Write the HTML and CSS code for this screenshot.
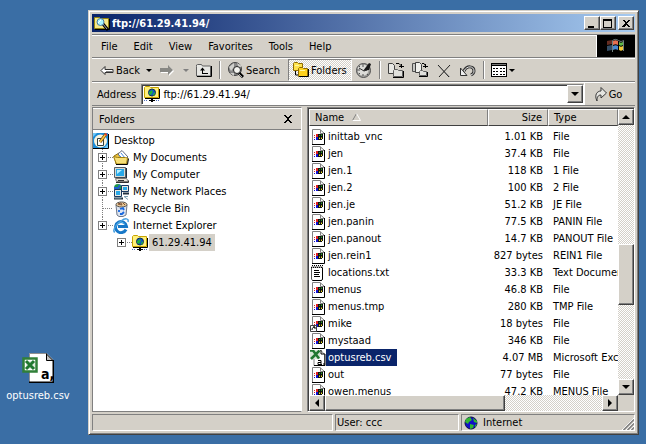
FILE: index.html
```
<!DOCTYPE html>
<html lang="en">
<head>
<meta charset="utf-8">
<title>ftp://61.29.41.94/</title>
<link rel="stylesheet" href="styles.css">
</head>
<body>
<svg class="defs" aria-hidden="true">
  <symbol id="folder-search" viewBox="0 0 16 16">
    <path d="M.500 2.500h5l1 1h8v10H.500z" fill="#f8e888" stroke="#948410"/>
    <path d="M15.500 4v10.500H1" fill="none" stroke="#000"/>
    <path d="M9 9l5 6" stroke="#000" stroke-width="3"/><path d="M9 9l4 5" stroke="#a0a0b0"/>
    <circle cx="6.500" cy="7" r="3.500" fill="#a8f4ff" stroke="#4878a0"/>
    <path d="M4 8l3-3" stroke="#fff"/>
  </symbol>
  <symbol id="folder-net" viewBox="0 0 16 16">
    <path d="M.500 1.500l1-1h4l1 1h8v10H.500z" fill="#fff07c" stroke="#c8a400"/>
    <path d="M15.500 3v9.500H1" fill="none" stroke="#000"/>
    <circle cx="8" cy="6.500" r="3.500" fill="#1050d0" stroke="#103050"/>
    <path d="M5 6l3-2 1 2-2 3-2-1zM9 8l2-2v2l-2 2z" fill="#20b040"/>
    <path d="M0 14.500h4M12 14.500h4" stroke="#5070c0" stroke-dasharray="1 1"/><path d="M5 14.500h6M7 13.500h2M7 15.500h2" stroke="#000"/>
  </symbol>
  <symbol id="desktop" viewBox="0 0 16 16">
    <path d="M0 0h15v15H0z" fill="#1c8cd8"/><path d="M0 15.500h15.500V1" fill="none" stroke="#000"/>
    <path d="M0 0h4L0 4zM15 15h-4l4-4z" fill="#70c8f8"/>
    <circle cx="7.500" cy="8" r="6.500" fill="#f8f4e0"/>
    <path d="M4.500 5.500h6v7h-6z" fill="#fff" stroke="#304040"/>
    <path d="M7 9l6-8" stroke="#7a4a10" stroke-width="3"/><path d="M7 9l6-8" stroke="#ffc840" stroke-width="1.500"/><path d="M12 1l2 1" stroke="#e04030" stroke-width="2"/>
  </symbol>
  <symbol id="documents" viewBox="0 0 16 16">
    <path d="M1 6l5-3 8 4v7H3z" fill="#e8c040" stroke="#907010"/>
    <path d="M5 4l4-3.500 6 6.500-4 4z" fill="#fff" stroke="#606880"/><path d="M8 3l4 5M6 5l4 4" stroke="#4888e0"/>
    <path d="M.500 6.500l4 1h8l2 .500-1 6H3.500z" fill="#f8e078" stroke="#a08010"/><path d="M3 14.500h11.500l1-6" fill="none" stroke="#000"/>
  </symbol>
  <symbol id="computer" viewBox="0 0 16 16">
    <path d="M1.500.500h11v10h-11z" fill="#d8d8d0" stroke="#586068"/><path d="M3 2h8v7H3z" fill="#28a8e8"/><path d="M4 3h5l-5 4z" fill="#b8f0ff"/>
    <path d="M13.500 1v10H3" fill="none" stroke="#203040"/><path d="M2.500 11.500h11l2 3h-12z" fill="#e8e4d8" stroke="#807c78"/><path d="M3 15.500h12.500v-2M5 13.500h6" stroke="#303030" fill="none"/>
  </symbol>
  <symbol id="network" viewBox="0 0 16 16">
    <circle cx="5" cy="4" r="4" fill="#209848"/><path d="M1 4h4l2-3" stroke="#2060d0" stroke-width="2" fill="none"/>
    <path d="M8.500 1.500h7v6h-7zM1.500 5.500h7v7h-7z" fill="#e8e8e0" stroke="#183860"/><path d="M10 3h4v3h-4zM3 7h4v4H3z" fill="#28a8e8"/>
    <path d="M1 14.500h9M10 9.500h6" stroke="#203040" stroke-width="2"/><path d="M1.500 14h7M11 12.500l4 3M11 12.500h4" stroke="#80a0b0"/>
  </symbol>
  <symbol id="recycle" viewBox="0 0 16 16">
    <path d="M3 4h11l-1 10-3 1.500H6L4 14z" fill="#dce4f0" stroke="#707888"/>
    <ellipse cx="8.500" cy="3.500" rx="5.500" ry="2.500" fill="#e8c898" stroke="#505050"/><path d="M5 3l3-1 1 2zM10 2l2 2" fill="#fff" stroke="#805030"/>
    <path d="M7 8l3-1 1 2M11 11l-2 2H7M6 11V9" stroke="#1868e0" stroke-width="1.800" fill="none"/>
  </symbol>
  <symbol id="ie" viewBox="0 0 16 16">
    <path d="M13 11.500A5.500 5.500 0 1 1 13.500 8.500H5" fill="none" stroke="#1878c8" stroke-width="3"/>
    <path d="M12 7A4.500 4.500 0 0 0 3.500 7" fill="none" stroke="#58b8f0"/>
    <path d="M2 14C-1 14 2 7 8 3c4-3 8-3 7 1" fill="none" stroke="#48a0e0" stroke-width="1.500"/>
  </symbol>
  <symbol id="file" viewBox="0 0 16 16">
    <path d="M2 0h8l4 4v12H2z" fill="#fff"/>
    <path d="M2.500 15V.500H10" fill="none" stroke="#808080"/><path d="M10.500.500v4H14M10.500 1l3.500 3" fill="none" stroke="#808080"/>
    <path d="M14.500 4v11.500H2" fill="none" stroke="#000"/>
    <path d="M4 6h1v1H4zm2-1h3v3H6zM4 8h1v1H4z" fill="#e02020"/><path d="M4 10h1v1H4zm2-2h3v3H6z" fill="#1010d0"/>
    <path d="M8 5h5v5h-1v1H8z" fill="#101010"/><path d="M9 6h1v1H9zm2-.500h1v1.500h-1z" fill="#20a020"/><path d="M9 8.500h1V10H9zm2 0h1V10h-1z" fill="#f0e020"/>
  </symbol>
  <symbol id="shortcut" viewBox="0 0 16 16">
    <use href="#file"/><path d="M.500 9.500h6v6h-6z" fill="#fff" stroke="#404040"/><path d="M2 14c0-2 1-3 3-3M3 11h2v2" fill="none" stroke="#000"/>
  </symbol>
  <symbol id="text" viewBox="0 0 16 16">
    <path d="M1.500 2v12l1 1.500h9l1-1V2z" fill="#fff" stroke="#585858"/><path d="M12.500 3v11l-1 1.500h-9" fill="none" stroke="#000"/>
    <path d="M2 .500h11M1 2.500h12" stroke="#000" stroke-dasharray="1 1"/><path d="M4 5.500h5M4 7.500h6M4 9.500h5M4 11.500h6" stroke="#000"/>
  </symbol>
  <symbol id="csv-small" viewBox="0 0 16 16">
    <path d="M4 .500h7l3.500 4v11H4z" fill="#fff" stroke="#808080"/><path d="M11 0v4h4v11.500H4" fill="none" stroke="#000"/>
    <path d="M0 0h10v9H0z" fill="#d8e8d8"/><path d="M0 .500h3l6 8M9.500.500L1 9" fill="none" stroke="#207830" stroke-width="2.500"/>
    <path d="M8 10.500h3v4H8v-2h3M11 14.500h1M14 13v2" fill="none" stroke="#000"/>
  </symbol>
  <symbol id="csv-large" viewBox="0 0 32 30">
    <path d="M7 .500h18l6 6V30H7z" fill="#fff"/><path d="M7.500 29V.500H25" fill="none" stroke="#909090"/>
    <path d="M24.500.500v7H32M24.500 1l7 7" fill="#c0c0c0" stroke="#000"/><path d="M31.500 7v22.500H7" fill="none" stroke="#000" stroke-width="2"/>
    <path d="M1.500 5.500h13v13h-13z" fill="#fff" stroke="#308038" stroke-width="2.500"/><path d="M4 8h9v8H4z" fill="#e0ece0"/>
    <path d="M4 8l8 8M12 8l-8 8" stroke="#207830" stroke-width="3"/>
    <text class="csv-letter" x="19" y="26">a,</text>
  </symbol>
  <symbol id="back" viewBox="0 0 16 16">
    <path d="M2 8.500l4-4v3h8v3H6v2z" fill="#fff" stroke="#303030"/><path d="M7 9.500h7" stroke="#808080"/>
  </symbol>
  <symbol id="forward" viewBox="0 0 16 16">
    <path d="M15 9l-5-5v3H2v4h8v3z" fill="#fff"/><path d="M14 8L9 3v3H1v4h8v3z" fill="#888884"/>
  </symbol>
  <symbol id="up" viewBox="0 0 16 16">
    <path d="M.500 4.500V3l1-.500h4l1 1.500h8v10H.500z" fill="#e8e8e4" stroke="#606060"/><path d="M1 14.500h14.500V4" fill="none" stroke="#000"/>
    <path d="M4 8.500L6.500 5.500 9 8.500zM6 8h1v4H6zM8 11h4v1H8zM6 11h2v1H6z" fill="#000"/>
  </symbol>
  <symbol id="search" viewBox="0 0 16 16">
    <circle cx="7" cy="7" r="6.500" fill="#888" stroke="#444"/><path d="M1 5l5-4v4L3 9zM9 1l5 3-3 2zM2 11l4 3v-3z" fill="#d0d0cc"/>
    <path d="M11 11l4 4" stroke="#000" stroke-width="3"/><circle cx="9" cy="8" r="3.500" fill="#f4f4f0" stroke="#222"/><path d="M11 12l3 3" stroke="#aaa"/>
  </symbol>
  <symbol id="folders" viewBox="0 0 16 16">
    <path d="M.500 1.500l1-1h3l1 1h4v7h-9z" fill="#ffe24c" stroke="#906c00"/>
    <path d="M2.500 9v4H5" fill="none" stroke="#000"/>
    <path d="M5.500 6.500l1-1h3l1 1h4v8h-9z" fill="#ffd21c" stroke="#906c00"/><path d="M6 14.500h9.500V7" fill="none" stroke="#000"/><path d="M7 8h5v1H7zM2 3h4v1H2z" fill="#fff8a0"/>
  </symbol>
  <symbol id="history" viewBox="0 0 16 16">
    <circle cx="7.500" cy="8.500" r="7" fill="#a0a09c" stroke="#505050"/><circle cx="7" cy="8" r="5.500" fill="#dcdcd8"/>
    <path d="M7 9l6-8 2 1-2 6z" fill="#181818"/><path d="M7 2v3M7 12v2M1 8h3M3 4l1 1M3 12l1-1M11 12l1 1" stroke="#505050"/><path d="M3 6l5 3 3-1" fill="none" stroke="#303030"/>
  </symbol>
  <symbol id="move" viewBox="0 0 16 16">
    <path d="M.500 1.500h4l2 2v8h-6z" fill="#e8e8e4" stroke="#404040"/><path d="M8 1.500h3l3 3M11 4.500h5M13.500 2v4" stroke="#000" fill="none"/>
    <path d="M5.500 8.500l1-1h3l1 1h4v6h-9z" fill="#e0e0dc" stroke="#606060"/><path d="M5 15.500h10.500V9" fill="none" stroke="#000"/>
  </symbol>
  <symbol id="copy" viewBox="0 0 16 16">
    <path d="M.500 1.500h5v8h-5z" fill="#c8c8c4" stroke="#505050"/><path d="M3.500.500h4l2 2v8h-6z" fill="#f0f0ec" stroke="#404040"/><path d="M10 1.500h2l2 3M11 4.500h5M13.500 2v4" stroke="#000" fill="none"/>
    <path d="M7.500 9.500l1-1h2l1 1h3v4h-7z" fill="#e0e0dc" stroke="#606060"/><path d="M7 14.500h8.500V10" fill="none" stroke="#000"/>
  </symbol>
  <symbol id="delete" viewBox="0 0 16 16">
    <path d="M3 4l11 11" stroke="#aaa"/><path d="M2 3l11 12M14 3L3 15" stroke="#202020"/>
  </symbol>
  <symbol id="undo" viewBox="0 0 16 16">
    <path d="M4 9c3-6 10-5 10 0 0 2-1 3-3 4" fill="none" stroke="#303030" stroke-width="3"/><path d="M4 9c3-6 10-5 10 0 0 2-1 3-3 4" fill="none" stroke="#e8e8e8"/>
    <path d="M.500 6v7.500H7z" fill="#eee" stroke="#303030"/>
  </symbol>
  <symbol id="views" viewBox="0 0 16 16">
    <path d="M0 1h16v14H0z" fill="#000"/><path d="M1 4h14v10H1z" fill="#fff"/><path d="M1 2h14v1H1z" fill="#777"/>
    <path d="M2 6h2v1H2zm3 0h2v1H5zm4 0h2v1H9zm3 0h2v1h-2zM2 9h2v1H2zm3 0h2v1H5zm4 0h2v1H9zm3 0h2v1h-2zM2 12h2v1H2zm3 0h2v1H5zm4 0h2v1H9zm3 0h2v1h-2z" fill="#000"/>
  </symbol>
  <symbol id="go" viewBox="0 0 16 16">
    <path d="M4 15C1 9 4 5 8 5V1.500L13.500 7 8 12V9C5 9 4 11 4 15z" fill="#e4e4e0" stroke="#383838"/>
  </symbol>
  <symbol id="globe" viewBox="0 0 16 16">
    <circle cx="8" cy="8" r="6" fill="#1010c8" stroke="#101040"/><path d="M3 4l4-2 2 3-3 2-1 2-3-2zM10 3l4 3v2l-3-1zM7 9l4 1-1 3-3 1zM12 10l2-1-2 4z" fill="#30b830"/>
  </symbol>
  <symbol id="flag" viewBox="0 0 20 18">
    <path d="M1 4l5-1v4l-5 1z" fill="#904030" opacity=".7"/><path d="M1 9l5-1v5l-5 1z" fill="#406080" opacity=".8"/>
    <path d="M7 4c2-1 3-1 5 0v4c-2-1-3-1-5 0z" fill="#e87050"/><path d="M13 5c2 1 2 1 4 0v3c-2 1-2 1-4 0z" fill="#60b848"/>
    <path d="M7 9c2-1 3-1 5 0v4c-2-1-3-1-5 0z" fill="#4888d0"/><path d="M13 9c2 1 2 1 4 0v4c-2 1-2 1-4 0z" fill="#f0c838"/>
    <path d="M6.500 15V3.500C9 2 10 2 12.500 3.500s3 1 5 0V14" stroke="#708080" fill="none"/>
  </symbol>
</svg>

<main class="desktop">
  <a class="shortcut" href="#optusreb"><svg class="shortcut-icon"><use href="#csv-large"/></svg><span>optusreb.csv</span></a>

  <section class="window">
    <header class="title">
      <svg class="icon"><use href="#folder-search"/></svg>
      <h1>ftp://61.29.41.94/</h1>
      <button class="box" aria-label="Minimize"><svg class="glyph" viewBox="0 0 10 9"><path d="M1 7h6v2H1z"/></svg></button>
      <button class="box" aria-label="Maximize"><svg class="glyph" viewBox="0 0 10 9"><path d="M0 0h9v9H0zM1 2v6h7V2z" fill-rule="evenodd"/></svg></button>
      <button class="box box-close" aria-label="Close"><svg class="glyph" viewBox="0 0 10 9"><path d="M1 1h2l2 2 2-2h2L6 4l3 4H7L5 6 3 8H1l3-4z"/></svg></button>
    </header>

    <div class="menu-row">
      <nav class="menus"><button>File</button><button>Edit</button><button>View</button><button>Favorites</button><button>Tools</button><button>Help</button></nav>
      <div class="brand"><svg class="flag"><use href="#flag"/></svg></div>
    </div>

    <div class="toolbar">
      <button class="tool back"><svg class="icon"><use href="#back"/></svg>Back</button>
      <button class="tool caret" aria-label="Back history"></button>
      <button class="tool" aria-label="Forward"><svg class="icon"><use href="#forward"/></svg></button>
      <button class="tool caret off" aria-label="Forward history"></button>
      <button class="tool" aria-label="Up"><svg class="icon"><use href="#up"/></svg></button>
      <i class="sep"></i>
      <button class="tool search"><svg class="icon"><use href="#search"/></svg>Search</button>
      <button class="tool pressed"><svg class="icon"><use href="#folders"/></svg>Folders</button>
      <button class="tool" aria-label="History"><svg class="icon"><use href="#history"/></svg></button>
      <i class="sep"></i>
      <button class="tool" aria-label="Move To"><svg class="icon"><use href="#move"/></svg></button>
      <button class="tool" aria-label="Copy To"><svg class="icon"><use href="#copy"/></svg></button>
      <button class="tool" aria-label="Delete"><svg class="icon"><use href="#delete"/></svg></button>
      <button class="tool" aria-label="Undo"><svg class="icon"><use href="#undo"/></svg></button>
      <i class="sep"></i>
      <button class="tool views" aria-label="Views"><svg class="icon"><use href="#views"/></svg><span class="tri"></span></button>
    </div>

    <form class="address">
      <label for="url">Address</label>
      <div class="combo">
        <svg class="icon"><use href="#folder-net"/></svg>
        <input id="url" type="text" value="ftp://61.29.41.94/">
        <button type="button" class="box drop" aria-label="Show addresses"><span class="tri"></span></button>
      </div>
      <button type="button" class="go"><svg class="icon"><use href="#go"/></svg>Go</button>
    </form>

    <div class="panes">
      <aside class="folders">
        <div class="folders-head"><h2>Folders</h2><button aria-label="Close folders"><svg class="glyph" viewBox="0 0 10 9"><path d="M1 0h2l2 3 2-3h2L6 4l3 4H7L5 5 3 8H1l3-4z"/></svg></button></div>
        <div class="tree">
          <div class="node root"><svg class="icon"><use href="#desktop"/></svg><span>Desktop</span></div>
          <ul>
            <li class="node"><button class="plus" aria-label="Expand"></button><i class="link"></i><svg class="icon"><use href="#documents"/></svg><span>My Documents</span></li>
            <li class="node"><button class="plus" aria-label="Expand"></button><i class="link"></i><svg class="icon"><use href="#computer"/></svg><span>My Computer</span></li>
            <li class="node"><button class="plus" aria-label="Expand"></button><i class="link"></i><svg class="icon"><use href="#network"/></svg><span>My Network Places</span></li>
            <li class="node"><i class="branch"></i><svg class="icon"><use href="#recycle"/></svg><span>Recycle Bin</span></li>
            <li class="node last"><button class="plus" aria-label="Expand"></button><i class="link"></i><svg class="icon"><use href="#ie"/></svg><span>Internet Explorer</span></li>
          </ul>
          <div class="node child"><button class="plus" aria-label="Expand"></button><i class="link"></i><svg class="icon"><use href="#folder-net"/></svg><span class="current">61.29.41.94</span></div>
        </div>
      </aside>

      <section class="files">
        <div class="list">
          <table>
            <colgroup><col><col class="col-size"><col class="col-type"></colgroup>
            <thead><tr><th>Name <svg class="sort" viewBox="0 0 9 8"><path d="M.500 7.500L4.500.500" stroke="#808080"/><path d="M4.500.500l4 7h-8" fill="none" stroke="#fff"/></svg></th><th class="size">Size</th><th>Type</th></tr></thead>
            <tbody>
              <tr><td><svg class="icon"><use href="#file"/></svg><span>inittab_vnc</span></td><td class="size">1.01 KB</td><td>File</td></tr>
              <tr><td><svg class="icon"><use href="#file"/></svg><span>jen</span></td><td class="size">37.4 KB</td><td>File</td></tr>
              <tr><td><svg class="icon"><use href="#file"/></svg><span>jen.1</span></td><td class="size">118 KB</td><td>1 File</td></tr>
              <tr><td><svg class="icon"><use href="#file"/></svg><span>jen.2</span></td><td class="size">100 KB</td><td>2 File</td></tr>
              <tr><td><svg class="icon"><use href="#file"/></svg><span>jen.je</span></td><td class="size">51.2 KB</td><td>JE File</td></tr>
              <tr><td><svg class="icon"><use href="#file"/></svg><span>jen.panin</span></td><td class="size">77.5 KB</td><td>PANIN File</td></tr>
              <tr><td><svg class="icon"><use href="#file"/></svg><span>jen.panout</span></td><td class="size">14.7 KB</td><td>PANOUT File</td></tr>
              <tr><td><svg class="icon"><use href="#file"/></svg><span>jen.rein1</span></td><td class="size">827 bytes</td><td>REIN1 File</td></tr>
              <tr><td><svg class="icon"><use href="#text"/></svg><span>locations.txt</span></td><td class="size">33.3 KB</td><td>Text Document</td></tr>
              <tr><td><svg class="icon"><use href="#file"/></svg><span>menus</span></td><td class="size">46.8 KB</td><td>File</td></tr>
              <tr><td><svg class="icon"><use href="#file"/></svg><span>menus.tmp</span></td><td class="size">280 KB</td><td>TMP File</td></tr>
              <tr><td><svg class="icon"><use href="#shortcut"/></svg><span>mike</span></td><td class="size">18 bytes</td><td>File</td></tr>
              <tr><td><svg class="icon"><use href="#file"/></svg><span>mystaad</span></td><td class="size">346 KB</td><td>File</td></tr>
              <tr id="optusreb"><td><svg class="icon"><use href="#csv-small"/></svg><span class="selected">optusreb.csv</span></td><td class="size">4.07 MB</td><td>Microsoft Excel</td></tr>
              <tr><td><svg class="icon"><use href="#file"/></svg><span>out</span></td><td class="size">77 bytes</td><td>File</td></tr>
              <tr><td><svg class="icon"><use href="#file"/></svg><span>owen.menus</span></td><td class="size">47.2 KB</td><td>MENUS File</td></tr>
            </tbody>
          </table>
        </div>
        <div class="vscroll"><button class="box" aria-label="Scroll up"><span class="tri up"></span></button><div class="above"></div><div class="thumb"></div><div class="below"></div><button class="box" aria-label="Scroll down"><span class="tri"></span></button></div>
        <div class="hscroll"><button class="box" aria-label="Scroll left"><span class="tri left"></span></button><div class="thumb"></div><div class="below"></div><button class="box" aria-label="Scroll right"><span class="tri right"></span></button></div>
      </section>
    </div>

    <footer class="status">
      <div class="cell fill"></div>
      <div class="cell user">User: ccc</div>
      <div class="cell zone"><svg class="icon"><use href="#globe"/></svg>Internet
        <svg class="grip" viewBox="0 0 12 12"><path d="M0 12L12 0M4 12l8-8M8 12l4-4" stroke="#fff"/><path d="M1.500 12L12 1.500M5.500 12L12 5.500M9.500 12L12 9.500" stroke="#808080" stroke-width="1.500"/></svg>
      </div>
    </footer>
  </section>
</main>
</body>
</html>
```
FILE: styles.css
```
:root {
  --face: #d4d0c8;
  --light: #fff;
  --shade: #808080;
  --dark: #404040;
  --navy: #0a246a;
}

* { box-sizing: border-box; }

body {
  margin: 0;
  background: #3a6ea5;
  font: 11px/17px "DejaVu Sans Condensed", "Noto Sans", sans-serif;
  color: #000;
}

button, input { font: inherit; color: inherit; margin: 0; padding: 0; }
button { border: 0; background: none; display: flex; align-items: center; justify-content: center; }
h1, h2 { font: inherit; margin: 0; }
ul { list-style: none; margin: 0; padding: 0; }

.defs { position: absolute; width: 0; height: 0; }
.icon { width: 16px; height: 16px; flex: none; display: block; }

.desktop { display: flex; height: 100vh; padding: 10px 7px 9px 0; }

.shortcut {
  width: 88px;
  flex: none;
  align-self: flex-end;
  display: flex;
  flex-direction: column;
  align-items: center;
  gap: 4px;
  padding: 0 12px 31px 0;
  color: #fff;
  text-decoration: none;
}
.shortcut-icon { width: 32px; height: 30px; }
.csv-letter { font: bold 14px "DejaVu Sans Condensed", sans-serif; fill: #000; }

.window {
  flex: 1;
  min-width: 0;
  display: flex;
  flex-direction: column;
  background: var(--face);
  border: 1px solid;
  border-color: var(--face) var(--dark) var(--dark) var(--face);
  box-shadow: inset 1px 1px var(--light), inset -1px -1px var(--shade);
  padding: 3px;
}

.title {
  display: flex;
  align-items: center;
  height: 18px;
  flex: none;
  padding: 0 1px 0 2px;
  background: linear-gradient(90deg, var(--navy), #a6caf0);
  color: #fff;
}
.title h1 { flex: 1; padding-left: 2px; font-weight: bold; }

.box {
  width: 16px;
  height: 14px;
  flex: none;
  background: var(--face);
  border: 1px solid;
  border-color: var(--light) var(--dark) var(--dark) var(--light);
  box-shadow: inset -1px -1px var(--shade);
}
.box-close { margin-left: 2px; }
.glyph { width: 10px; height: 9px; shape-rendering: crispEdges; }

.menu-row, .toolbar, .address {
  display: flex;
  height: 24px;
  flex: none;
  border-top: 1px solid var(--light);
  border-bottom: 1px solid var(--shade);
}
.menu-row { margin-top: 2px; border-top-color: var(--shade); box-shadow: inset 0 1px var(--light); }
.menus { display: flex; flex: 1; gap: 16px; padding-left: 9px; }
.brand { width: 39px; background: #000; border-left: 1px solid var(--light); display: flex; align-items: center; justify-content: center; }
.flag { width: 20px; height: 18px; }

.toolbar { align-items: center; padding-left: 7px; }
.tool { height: 22px; flex: none; padding: 0 4px; gap: 2px; }
.tool.back { padding: 0 2px 0 0; gap: 1px; }
.tool.caret { width: 13px; padding: 0; }
.tri, .caret::after { content: ""; width: 0; height: 0; border: 3px solid transparent; border-top-color: #000; border-bottom: 0; }
.box .tri { border-width: 4px; border-bottom: 0; }
.caret.off::after { border-top-color: #808080; }
.box .tri.up { border: 4px solid transparent; border-bottom-color: #000; border-top: 0; }
.box .tri.left { border: 4px solid transparent; border-right-color: #000; border-left: 0; }
.box .tri.right { border: 4px solid transparent; border-left-color: #000; border-right: 0; }
.sep { width: 2px; height: 18px; margin: 0 3px; border-left: 1px solid var(--shade); border-right: 1px solid var(--light); }
.tool.search { padding: 0 8px 0 4px; }
.tool.views { padding-left: 3px; }
.tool.pressed {
  border: 1px solid;
  border-color: var(--shade) var(--light) var(--light) var(--shade);
  background: repeating-conic-gradient(#fff 0 25%, var(--face) 0 50%) 0 0 / 2px 2px;
}

.address { align-items: center; padding-left: 5px; }
.combo {
  display: flex;
  align-items: center;
  flex: 1;
  min-width: 0;
  height: 21px;
  margin-left: 5px;
  padding-left: 2px;
  background: #fff;
  border: 1px solid;
  border-color: var(--shade) var(--light) var(--light) var(--shade);
  box-shadow: inset 1px 1px var(--dark);
}
.combo input { flex: 1; min-width: 0; border: 0; outline: 0; background: none; padding-left: 3px; }
.drop { height: 18px; }
.go { width: 51px; height: 22px; padding-right: 5px; border-left: 1px solid var(--light); }

.panes { display: flex; flex: 1; min-height: 0; gap: 5px; padding-top: 1px; }

.folders {
  width: 210px;
  flex: none;
  background: #fff;
  border: 1px solid var(--shade);
  border-right-color: var(--light);
}
.folders-head {
  display: flex;
  justify-content: space-between;
  align-items: center;
  height: 22px;
  padding: 0 8px 0 6px;
  background: var(--face);
  border-top: 1px solid var(--light);
  border-bottom: 1px solid var(--shade);
}
.tree { padding-top: 2px; }
.tree ul { margin-left: 9px; }
.node { display: flex; align-items: center; height: 17px; }
.node span { padding: 0 3px; margin-left: 1px; }
.root span { margin-left: 2px; }
.tree li { margin-left: -4px; background: repeating-linear-gradient(var(--shade) 0 1px, transparent 1px 2px) 4px 0 / 1px 100% no-repeat; }
.tree .last { background-size: 1px 8px; }
.tree .child { margin-left: 24px; }
.plus {
  width: 9px;
  height: 9px;
  flex: none;
  border: 1px solid var(--shade);
  background: linear-gradient(#000, #000) center / 5px 1px no-repeat, linear-gradient(#000, #000) center / 1px 5px no-repeat, #fff;
}
.link, .branch { height: 1px; background: repeating-linear-gradient(90deg, transparent 0 1px, var(--shade) 1px 2px); }
.link { width: 6px; }
.branch { width: 11px; margin-left: 4px; }
.current { background: var(--face); }

.files {
  flex: 1;
  min-width: 0;
  display: grid;
  grid-template: minmax(0, 1fr) 16px / minmax(0, 1fr) 16px;
  background: var(--face);
  border: 1px solid;
  border-color: var(--shade) var(--light) var(--light) var(--shade);
  box-shadow: inset 1px 1px var(--dark);
  padding: 1px 0 0 1px;
}
.list { overflow: hidden; background: #fff; }
table { width: 100%; table-layout: fixed; border-collapse: separate; border-spacing: 0; }
.col-size { width: 60px; }
.col-type { width: 70px; }
th {
  height: 17px;
  padding: 0 5px;
  font-weight: normal;
  text-align: left;
  line-height: 15px;
  background: var(--face);
  border: 1px solid;
  border-color: var(--light) var(--shade) var(--dark) var(--light);
}
.sort { width: 9px; height: 8px; margin-left: 5px; }
tbody::before { content: ""; display: block; height: 2px; }
td { height: 17px; padding: 0 5px; white-space: nowrap; overflow: hidden; }
td:first-child { display: flex; align-items: center; padding: 0 0 0 1px; }
td span { padding: 0 6px 0 2px; }
.size { text-align: right; }
.selected { background: var(--navy); color: #fff; }

.vscroll { display: flex; flex-direction: column; }
.hscroll { display: flex; }
.vscroll, .hscroll { background: repeating-conic-gradient(#fff 0 25%, var(--face) 0 50%) 0 0 / 2px 2px; }
.files .box { width: 16px; height: 16px; }
.thumb {
  background: var(--face);
  border: 1px solid;
  border-color: var(--light) var(--dark) var(--dark) var(--light);
  box-shadow: inset -1px -1px var(--shade);
}
.vscroll .above { flex: 119; }
.vscroll .thumb { flex: 60; }
.vscroll .below { flex: 74; }
.hscroll .thumb { flex: 180; }
.hscroll .below { flex: 98; }

.status { display: flex; gap: 2px; height: 19px; flex: none; padding-top: 2px; }
.cell { display: flex; align-items: center; border: 1px solid; border-color: var(--shade) var(--light) var(--light) var(--shade); padding-left: 1px; }
.cell.fill { flex: 1; }
.user { width: 124px; }
.zone { width: 174px; gap: 4px; }
.grip { width: 12px; height: 12px; margin-left: auto; align-self: flex-end; }
```
